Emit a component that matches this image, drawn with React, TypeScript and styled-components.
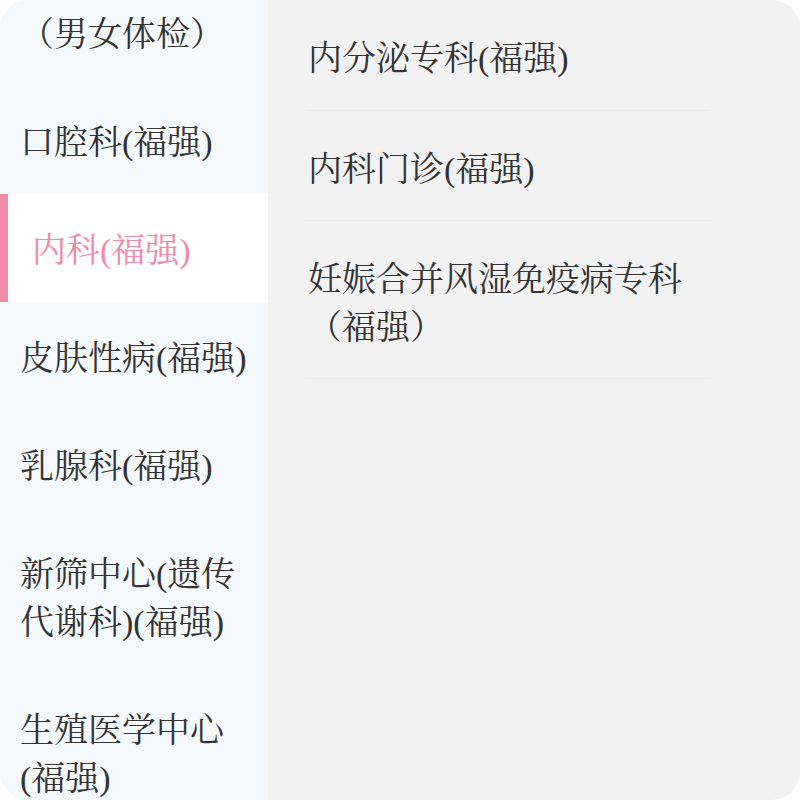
import React, { useLayoutEffect, useRef } from "react";
import styled, { createGlobalStyle } from "styled-components";

const GlobalStyle = createGlobalStyle`
  html, body {
    margin: 0;
    padding: 0;
    background: #ffffff;
  }
  * {
    box-sizing: border-box;
  }
`;

const departments = [
  "（男女体检）",
  "口腔科(福强)",
  "内科(福强)",
  "皮肤性病(福强)",
  "乳腺科(福强)",
  "新筛中心(遗传代谢科)(福强)",
  "生殖医学中心(福强)",
  "儿科(福强)",
];

const clinics = [
  "内分泌专科(福强)",
  "内科门诊(福强)",
  "妊娠合并风湿免疫病专科（福强）",
];

const App = () => {
  const sideRef = useRef<HTMLDivElement>(null);

  // list is scrolled a bit, first item is only partly visible
  useLayoutEffect(() => {
    if (sideRef.current) sideRef.current.scrollTop = 22;
  }, []);

  return (
    <>
      <GlobalStyle />
      <Container>
        <Sidebar ref={sideRef}>
          {departments.map((name, index) => (
            <DeptItem key={"dept-" + index} $active={index === 2}>
              {name}
            </DeptItem>
          ))}
        </Sidebar>
        <Content>
          {clinics.map((name) => (
            <ClinicItem key={"clinic-" + name}>{name}</ClinicItem>
          ))}
        </Content>
      </Container>
    </>
  );
};

export default App;

const Container = styled.div`
  width: 800px;
  height: 800px;
  display: flex;
  border-radius: 28px;
  overflow: hidden;
  background-color: #f2f2f2;
  font-family: "Liberation Serif", "Noto Serif CJK SC", "Source Han Serif SC",
    "AR PL UMing CN", serif;
  font-size: 34px;
  color: #333333;
`;

const Sidebar = styled.div`
  width: 268px;
  flex-shrink: 0;
  height: 100%;
  overflow-y: auto;
  background-color: #f5f9fc;
  scrollbar-width: none;

  &::-webkit-scrollbar {
    display: none;
  }
`;

const DeptItem = styled.div<{ $active?: boolean }>`
  padding: 33px 20px 27px ${({ $active }) => ($active ? "24px" : "20px")};
  line-height: 48px;
  border-left: ${({ $active }) => ($active ? "8px solid #f08aa8" : "none")};
  background-color: ${({ $active }) => ($active ? "#ffffff" : "transparent")};
  color: ${({ $active }) => ($active ? "#f08aa8" : "#333333")};
`;

const Content = styled.div`
  flex: 1;
  padding: 0 90px 0 38px;
`;

const ClinicItem = styled.div`
  padding: 35px 2px 27px;
  line-height: 1.4;
  border-bottom: 1px solid #ebebeb;
`;
